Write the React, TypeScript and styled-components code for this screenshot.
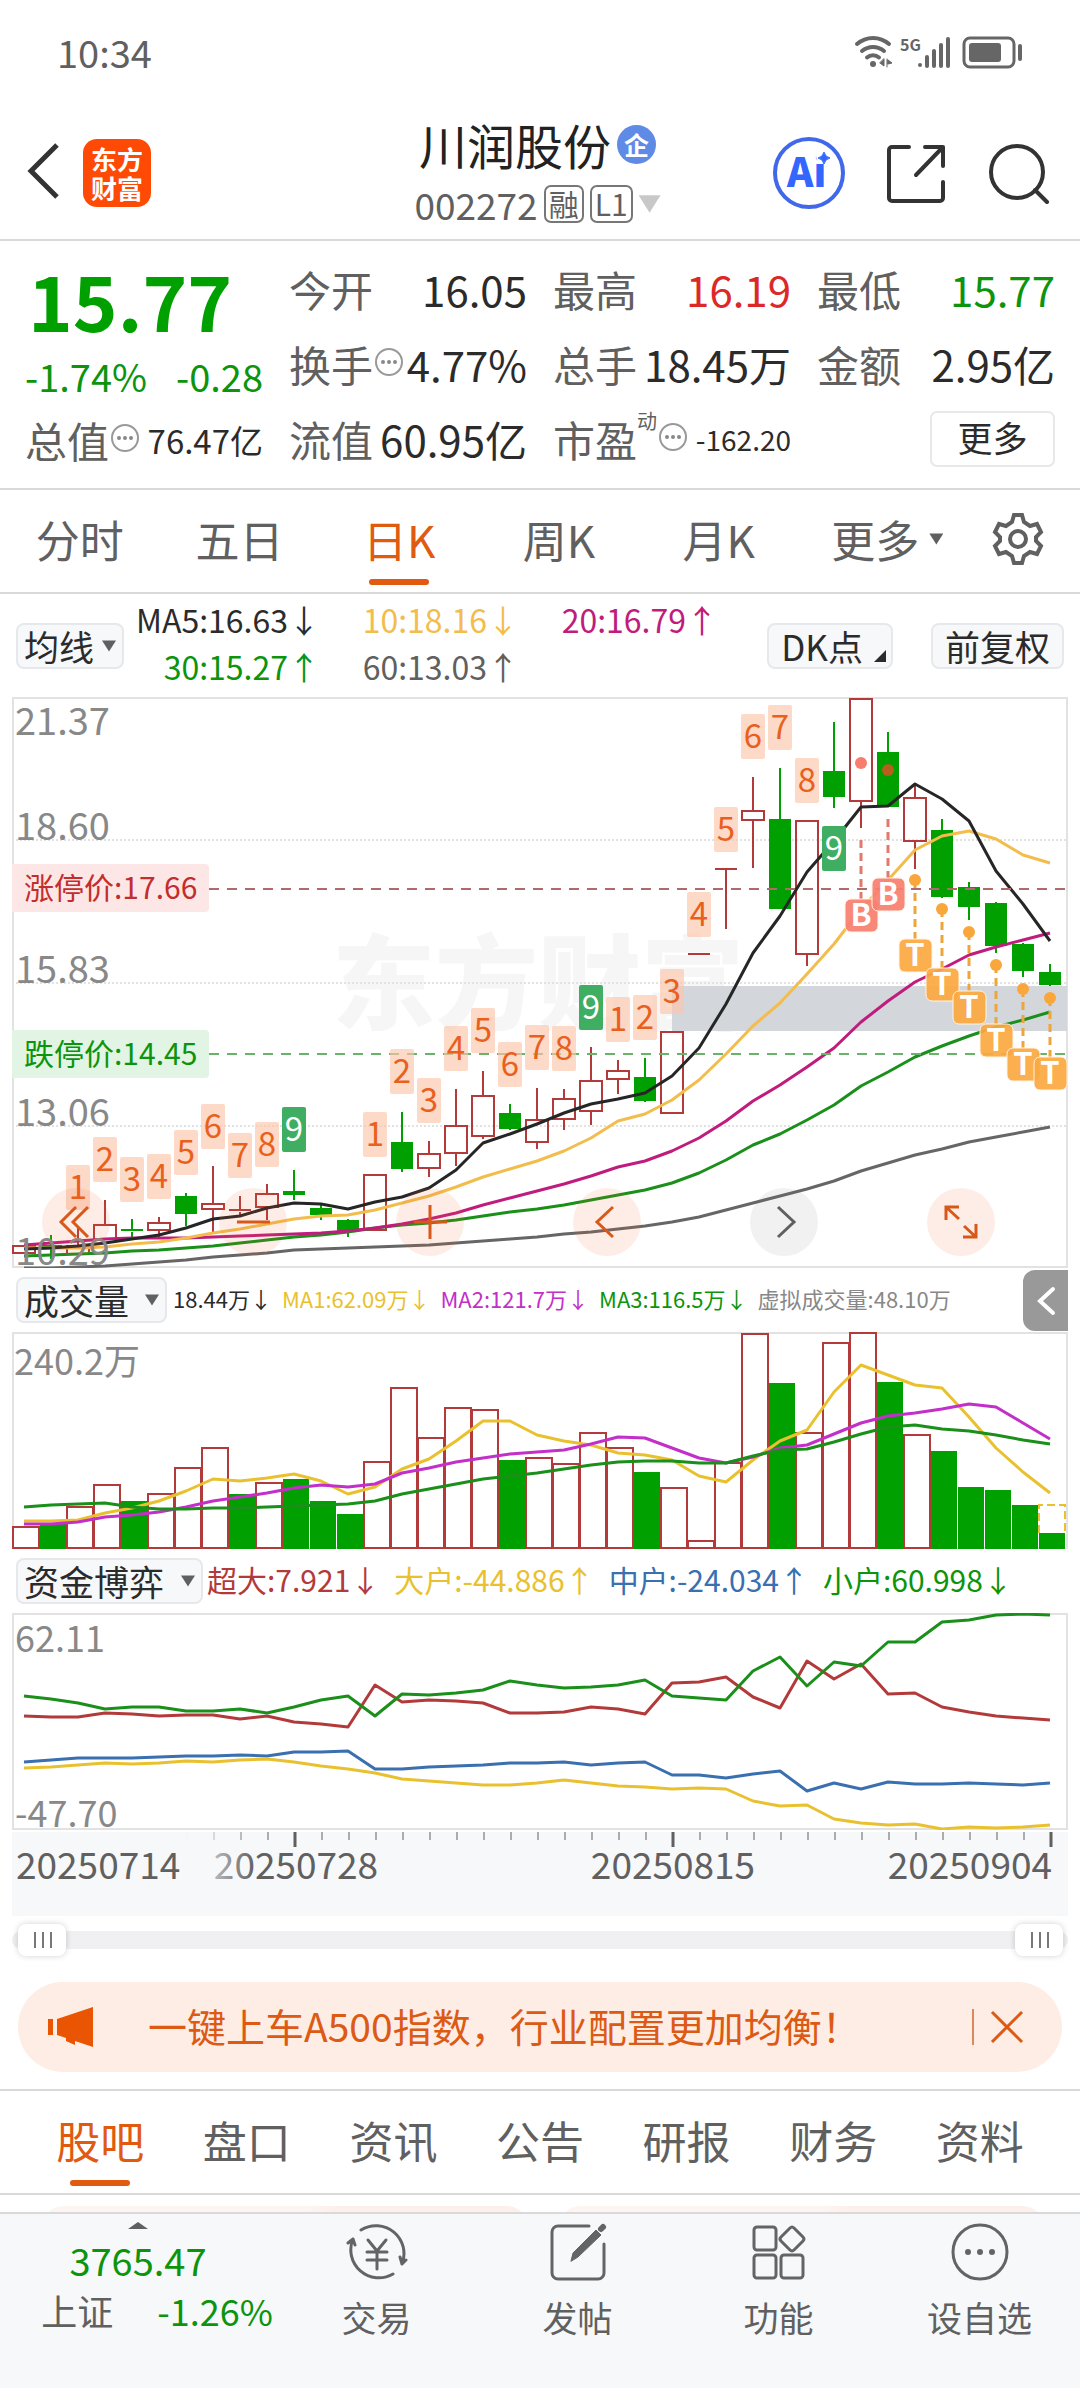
import React from "react";
import styled, { createGlobalStyle } from "styled-components";

const FONT = '"Noto Sans CJK SC", "Noto Sans", sans-serif';

const C = {
  ink: "#2b2b2b",
  sub: "#606060",
  faint: "#888888",
  line: "#d9d9d9",
  orange: "#e05a10",
  green: "#00a000",
  greenText: "#0c940c",
  red: "#b23a3a",
  redText: "#dc2828",
  yellow: "#f2bd4c",
  gold: "#e9c12e",
  magenta: "#bf1c7d",
  purple: "#c22fc9",
  blue: "#3a6fb0",
  panel: "#f6f8fa",
};

const Global = createGlobalStyle`
  *, *::before, *::after { box-sizing: border-box; }
  body { margin: 0; background: #fff; color: ${C.ink}; font-family: ${FONT}; }
  button, select, input { font: inherit; color: inherit; margin: 0; }
  button { border: 0; background: none; padding: 0; cursor: pointer; }
  a { color: inherit; text-decoration: none; }
  h1, p, dl, dd, dt { margin: 0; font-weight: 400; }
`;

/* ---------- shared parts ---------- */

const Page = styled.div`
  display: flex;
  flex-direction: column;
  background: #fff;
`;

const Caret = styled.span<{ $size?: number; $color?: string; $up?: boolean }>`
  display: inline-block;
  flex: none;
  width: ${(p) => p.$size ?? 14}px;
  height: ${(p) => p.$size ?? 14}px;
  background: ${(p) => p.$color ?? C.sub};
  clip-path: ${(p) =>
    p.$up ? "polygon(50% 40%, 100% 75%, 0 75%)" : "polygon(0 10%, 100% 10%, 50% 90%)"};
`;

const chip = `
  height: 46px;
  border: 2px solid #e6e8ec;
  border-radius: 8px;
  background: ${C.panel};
  font-size: 35px;
  color: ${C.ink};
`;

const PickerBox = styled.label<{ $width: number }>`
  position: relative;
  display: block;
  flex: none;
  width: ${(p) => p.$width}px;
  height: 46px;
`;

const Picker = styled.select`
  ${chip}
  display: block;
  appearance: none;
  width: 100%;
  padding: 0 0 0 6px;
  line-height: 38px;
  outline: none;
`;

const PickerCaret = styled(Caret)`
  position: absolute;
  right: 8px;
  top: 16px;
  pointer-events: none;
`;

function Dropdown({ label, options, width }: { label: string; options: string[]; width: number }) {
  return (
    <PickerBox $width={width}>
      <Picker aria-label={label} defaultValue={options[0]}>
        {options.map((o) => (
          <option key={o}>{o}</option>
        ))}
      </Picker>
      <PickerCaret />
    </PickerBox>
  );
}

/* ---------- status bar ---------- */

const StatusBar = styled.div`
  display: flex;
  align-items: center;
  justify-content: space-between;
  height: 108px;
  padding: 0 56px 5px 57px;
  font-size: 38px;
  color: ${C.sub};
`;

function StatusIcons() {
  return (
    <svg width="170" height="36" viewBox="0 0 170 36" fill="none" stroke="#666" strokeLinecap="round">
      <g strokeWidth="4">
        <path d="M3 10a24 24 0 0 1 32 0" />
        <path d="M8 17a17 17 0 0 1 22 0" />
        <path d="M13 23.500a9 9 0 0 1 12 0" />
      </g>
      <circle cx="19" cy="30" r="3" fill="#666" stroke="none" />
      <path d="M30 25v7l-4-3zM33 25v8M34 26l4 3-4 1z" fill="#666" strokeWidth="1" />
      <text x="46" y="17" fontSize="16" fontWeight="700" fill="#666" stroke="none" fontFamily={FONT}>
        5G
      </text>
      <path d="M66 31v0M73 23v9M80 17v15M87 11v21M94 5v27" strokeWidth="4" />
      <rect x="110" y="4" width="50" height="29" rx="6" strokeWidth="3" />
      <rect x="115" y="9" width="32" height="19" rx="3" fill="#666" stroke="none" />
      <path d="M166 12v13" strokeWidth="4" />
    </svg>
  );
}

/* ---------- header ---------- */

const Header = styled.header`
  display: grid;
  grid-template-columns: 1fr auto 1fr;
  align-items: start;
  height: 133px;
  padding: 0 30px 0 25px;
  border-bottom: 2px solid ${C.line};
`;

const HeaderLeft = styled.div`
  display: flex;
  align-items: center;
  gap: 20px;
  padding-top: 31px;
`;

const HeaderRight = styled.div`
  display: flex;
  align-items: center;
  justify-content: flex-end;
  gap: 41px;
  padding-top: 29px;
  button {
    display: flex;
  }
`;

const BrandLogo = styled.a`
  display: grid;
  place-content: center;
  width: 68px;
  height: 68px;
  border-radius: 14px;
  background: #ff4a05;
  color: #fff;
  font-size: 26px;
  font-weight: 700;
  line-height: 29px;
  text-align: center;
`;

const TitleBlock = styled.div`
  display: flex;
  flex-direction: column;
  align-items: center;
  padding-top: 5px;
`;

const TitleRow = styled.div`
  display: flex;
  align-items: center;
  gap: 6px;
  height: 62px;
  h1 {
    font-size: 48px;
    line-height: 56px;
    color: #222;
  }
`;

const OrgBadge = styled.span`
  display: grid;
  place-items: center;
  width: 39px;
  height: 39px;
  border-radius: 50%;
  background: #5f8be6;
  color: #fff;
  font-size: 25px;
  font-weight: 700;
  line-height: 32px;
`;

const CodeRow = styled.div`
  display: flex;
  align-items: center;
  gap: 6px;
  height: 58px;
  font-size: 37px;
  line-height: 46px;
  color: ${C.sub};
`;

const CodeTag = styled.span`
  height: 38px;
  padding: 0 3px;
  border: 2px solid #777;
  border-radius: 7px;
  font-size: 30px;
  line-height: 32px;
`;

/* ---------- quote ---------- */

const Quote = styled.section`
  display: grid;
  grid-template-columns: repeat(4, 1fr);
  gap: 26px;
  padding: 10px 25px 11px;
  border-bottom: 2px solid ${C.line};
`;

const QuoteColumn = styled.dl`
  display: flex;
  flex-direction: column;
`;

const Price = styled.p`
  height: 96px;
  padding-left: 3px;
  font-size: 76px;
  font-weight: 700;
  line-height: 96px;
  color: ${C.green};
`;

const Change = styled.p`
  display: flex;
  justify-content: space-between;
  height: 55px;
  font-size: 38px;
  line-height: 58px;
  color: ${C.greenText};
`;

const QuoteItem = styled.div`
  display: flex;
  align-items: center;
  justify-content: space-between;
  height: 75px;
  white-space: nowrap;
`;

const QuoteLabel = styled.dt`
  display: flex;
  align-items: center;
  font-size: 42px;
  line-height: 60px;
  color: ${C.sub};
  sup {
    align-self: flex-start;
    margin-right: -16px;
    font-size: 20px;
    line-height: 24px;
  }
`;

const QuoteValue = styled.dd<{ $color?: string; $size?: number }>`
  font-size: ${(p) => p.$size ?? 42}px;
  line-height: 60px;
  color: ${(p) => p.$color ?? C.ink};
`;

const MoreButton = styled.button`
  width: 125px;
  height: 56px;
  margin-left: auto;
  padding-bottom: 4px;
  border: 2px solid #e8e8e8;
  border-radius: 7px;
  font-size: 35px;
  line-height: 48px;
`;

const SupDots = styled.span`
  display: flex;
  margin-left: 16px;
`;

function InfoDots() {
  return (
    <svg width="32" height="32" viewBox="0 0 32 32" fill="none">
      <circle cx="16" cy="14" r="13" stroke="#999" strokeWidth="2" />
      <g fill="#888">
        <circle cx="10" cy="14" r="2" />
        <circle cx="16" cy="14" r="2" />
        <circle cx="22" cy="14" r="2" />
      </g>
    </svg>
  );
}

type Item = { label: string; value: string; color?: string; info?: boolean; sup?: string; size?: number };

function QuoteRow({ label, value, color, info, sup, size }: Item) {
  return (
    <QuoteItem>
      <QuoteLabel>
        {label}
        {sup && <sup>{sup}</sup>}
        {info && !sup && <InfoDots />}
        {info && sup && (
          <SupDots>
            <InfoDots />
          </SupDots>
        )}
      </QuoteLabel>
      <QuoteValue $color={color} $size={size}>
        {value}
      </QuoteValue>
    </QuoteItem>
  );
}

/* ---------- tabs ---------- */

const PeriodTabs = styled.nav`
  display: flex;
  align-items: stretch;
  height: 104px;
  padding-right: 20px;
  border-bottom: 2px solid ${C.line};
`;

const Tab = styled.button<{ $active?: boolean; $grow?: number }>`
  position: relative;
  display: flex;
  align-items: center;
  justify-content: center;
  gap: 10px;
  flex: ${(p) => p.$grow ?? 160} 1 0;
  padding-bottom: 4px;
  font-size: 44px;
  color: ${(p) => (p.$active ? C.orange : C.sub)};
  &::after {
    content: "";
    display: ${(p) => (p.$active ? "block" : "none")};
    position: absolute;
    bottom: 7px;
    left: calc(50% - 30px);
    width: 60px;
    height: 6px;
    border-radius: 3px;
    background: ${C.orange};
  }
`;

/* ---------- moving averages ---------- */

const AverageBar = styled.div`
  display: flex;
  align-items: flex-start;
  height: 103px;
  padding: 0 16px;
`;

const AverageGrid = styled.div`
  display: grid;
  grid-template-columns: 196px 199px 199px;
  grid-auto-rows: 47px;
  flex: 1;
  padding-top: 2px;
  font-size: 32px;
  line-height: 47px;
  text-align: right;
  white-space: nowrap;
`;

const Tinted = styled.span<{ $color: string }>`
  color: ${(p) => p.$color};
`;

const AverageChips = styled.div`
  display: flex;
  gap: 38px;
  padding-top: 29px;
`;

const ChipSlot = styled.div`
  flex: none;
  padding-top: 29px;
`;

const ChipButton = styled.button<{ $corner?: boolean }>`
  ${chip}
  position: relative;
  padding: 0 12px;
  line-height: 38px;
  padding-right: ${(p) => (p.$corner ? 28 : 12)}px;
  white-space: nowrap;
  &::after {
    content: "";
    display: ${(p) => (p.$corner ? "block" : "none")};
    position: absolute;
    right: 5px;
    bottom: 5px;
    width: 12px;
    height: 12px;
    background: ${C.ink};
    clip-path: polygon(100% 0, 100% 100%, 0 100%);
  }
`;

/* ---------- charts ---------- */

const ChartBox = styled.section`
  position: relative;
  margin: 0 12px;
`;

const Plot = styled.svg`
  display: block;
  width: 100%;
  height: auto;
  font-family: ${FONT};
`;

const ChartTools = styled.div`
  position: absolute;
  left: 30px;
  right: 73px;
  bottom: 12px;
  display: flex;
  justify-content: space-between;
`;

const RoundTool = styled.button<{ $muted?: boolean }>`
  display: grid;
  place-items: center;
  width: 68px;
  height: 68px;
  border-radius: 50%;
  background: ${(p) => (p.$muted ? "rgba(120,120,120,0.1)" : "rgba(240,110,50,0.12)")};
  color: ${(p) => (p.$muted ? C.sub : "#d8581a")};
`;

const IndicatorBar = styled.div<{ $gap: number; $size: number }>`
  position: relative;
  display: flex;
  align-items: center;
  gap: ${(p) => p.$gap}px;
  height: 64px;
  padding-left: 4px;
  font-size: ${(p) => p.$size}px;
  white-space: nowrap;
`;

const Readings = styled.div<{ $gap: number }>`
  display: flex;
  gap: ${(p) => p.$gap}px;
  padding-bottom: 4px;
`;

const CollapseButton = styled.button`
  position: absolute;
  right: 0;
  top: 2px;
  display: grid;
  place-items: center;
  width: 45px;
  height: 61px;
  border-radius: 12px 0 0 12px;
  background: #999;
  color: #fff;
`;

const COUNT = 39;
const cx = (i: number) => Math.round(24.4 + 26.99 * i);
const toPoints = (ys: number[]) => ys.map((y, i) => `${cx(i)},${y}`).join(" ");

/* direction, body top, body bottom, high, low */
type Candle = ["u" | "d", number, number, number, number];
const candles: Candle[] = [
  ["u", 1245, 1253, 1245, 1253],
  ["d", 1245, 1249, 1235, 1259],
  ["u", 1245, 1254, 1226, 1254],
  ["u", 1224, 1239, 1200, 1239],
  ["d", 1230, 1232, 1219, 1237],
  ["u", 1222, 1230, 1217, 1237],
  ["d", 1196, 1214, 1193, 1226],
  ["u", 1203, 1209, 1166, 1233],
  ["u", 1210, 1212, 1196, 1216],
  ["u", 1193, 1207, 1184, 1220],
  ["d", 1191, 1195, 1170, 1200],
  ["d", 1208, 1215, 1205, 1220],
  ["d", 1220, 1231, 1219, 1237],
  ["u", 1174, 1230, 1174, 1230],
  ["d", 1142, 1169, 1112, 1172],
  ["u", 1153, 1168, 1141, 1177],
  ["u", 1125, 1153, 1089, 1166],
  ["u", 1095, 1136, 1071, 1139],
  ["d", 1113, 1129, 1104, 1130],
  ["u", 1119, 1142, 1088, 1149],
  ["u", 1098, 1119, 1089, 1130],
  ["u", 1080, 1111, 1047, 1125],
  ["u", 1070, 1079, 1060, 1094],
  ["d", 1077, 1101, 1058, 1102],
  ["u", 1031, 1113, 1031, 1113],
  ["u", 954, 955, 954, 955],
  ["u", 869, 870, 869, 929],
  ["u", 810, 820, 777, 868],
  ["d", 819, 909, 768, 909],
  ["u", 820, 954, 820, 966],
  ["d", 771, 797, 722, 808],
  ["u", 698, 801, 698, 828],
  ["d", 752, 807, 732, 807],
  ["u", 797, 841, 785, 869],
  ["d", 830, 897, 819, 898],
  ["d", 887, 907, 882, 920],
  ["d", 903, 946, 902, 953],
  ["d", 944, 971, 943, 977],
  ["d", 972, 985, 964, 986],
];

const averages: { color: string; ys: number[] }[] = [
  {
    color: "#666666",
    ys: [1268, 1268, 1267, 1266, 1264, 1262, 1260, 1257, 1255, 1253, 1250, 1249, 1248, 1247, 1246, 1245, 1243, 1241, 1239, 1237, 1234, 1232, 1229, 1226, 1222, 1217, 1210, 1203, 1196, 1189, 1181, 1171, 1163, 1155, 1149, 1142, 1137, 1132, 1127],
  },
  {
    color: "#1a8f1a",
    ys: [1256, 1255, 1254, 1253, 1251, 1250, 1248, 1246, 1243, 1240, 1237, 1235, 1232, 1228, 1225, 1223, 1220, 1216, 1212, 1209, 1205, 1200, 1195, 1190, 1183, 1173, 1160, 1145, 1134, 1120, 1105, 1086, 1072, 1057, 1046, 1036, 1027, 1020, 1012],
  },
  {
    color: C.magenta,
    ys: [1245, 1243, 1241, 1239, 1238, 1238, 1238, 1237, 1236, 1235, 1234, 1233, 1231, 1228, 1224, 1219, 1213, 1205, 1198, 1191, 1184, 1176, 1167, 1161, 1151, 1138, 1121, 1101, 1085, 1067, 1048, 1022, 1001, 982, 969, 955, 947, 940, 933],
  },
  {
    color: C.yellow,
    ys: [1248, 1248, 1248, 1247, 1244, 1242, 1238, 1233, 1229, 1224, 1219, 1216, 1215, 1210, 1203, 1196, 1187, 1177, 1169, 1161, 1151, 1138, 1121, 1114, 1100, 1080, 1054, 1026, 1003, 974, 944, 909, 880, 850, 836, 831, 839, 855, 863],
  },
  {
    color: "#262626",
    ys: [1249, 1248, 1246, 1243, 1239, 1235, 1228, 1219, 1216, 1208, 1203, 1204, 1209, 1202, 1197, 1188, 1170, 1143, 1134, 1124, 1113, 1104, 1099, 1093, 1076, 1048, 1004, 953, 916, 872, 841, 807, 806, 784, 799, 821, 871, 904, 941],
  },
];

/* candle index, sequence number, top of the tag */
const sequence: [number, number, number][] = [
  [2, 1, 1165], [3, 2, 1137], [4, 3, 1157], [5, 4, 1154], [6, 5, 1130], [7, 6, 1104], [8, 7, 1133], [9, 8, 1122], [10, 9, 1107],
  [13, 1, 1112], [14, 2, 1049], [15, 3, 1078], [16, 4, 1026], [17, 5, 1008], [18, 6, 1042], [19, 7, 1025], [20, 8, 1026], [21, 9, 985],
  [22, 1, 997], [23, 2, 995], [24, 3, 969], [25, 4, 892], [26, 5, 807], [27, 6, 714], [28, 7, 705], [29, 8, 758], [30, 9, 826],
];

/* candle index, letter, dot, start of the stem, top of the badge */
const signals: [number, "B" | "T", number, number, number][] = [
  [31, "B", 763, 840, 899],
  [32, "B", 770, 819, 878],
  [33, "T", 880, 880, 939],
  [34, "T", 909, 909, 968],
  [35, "T", 932, 932, 991],
  [36, "T", 965, 965, 1024],
  [37, "T", 989, 989, 1048],
  [38, "T", 998, 998, 1057],
];

const priceScale: [string, number][] = [
  ["21.37", 735],
  ["18.60", 840],
  ["15.83", 983],
  ["13.06", 1126],
  ["10.29", 1265],
];

function PriceChart() {
  return (
    <Plot viewBox="12 697 1056 571" role="img" aria-label="日K">
      <text x="332" y="1022" fontSize="103" fontWeight="900" fill="#f6f6f6">
        东方财富
      </text>
      <g stroke="#e2e2e2" fill="none">
        <path d="M12 840H1067M12 983H1067M12 1126H1067" strokeWidth="2" strokeDasharray="2 2" />
        <rect x="13" y="698" width="1054" height="569" strokeWidth="2" />
      </g>
      <rect x="672" y="986" width="395" height="45" fill="#d3d7dc" />
      {candles.map(([dir, top, bottom, high, low], i) => {
        const x = cx(i);
        const up = dir === "u";
        const color = up ? C.red : C.green;
        const flat = bottom - top < 3;
        return (
          <g key={i} stroke={color} strokeWidth="2">
            {high < top && <path d={`M${x} ${high}V${top}`} />}
            {low > bottom && <path d={`M${x} ${bottom}V${low}`} />}
            {flat ? (
              <path d={`M${x - 11} ${top}H${x + 11}`} />
            ) : up ? (
              <rect x={x - 11} y={top + 1} width="22" height={bottom - top - 1} fill="none" />
            ) : (
              <rect x={x - 11} y={top} width="22" height={bottom - top} fill={color} stroke="none" />
            )}
          </g>
        );
      })}
      {averages.map((line) => (
        <polyline key={line.color} points={toPoints(line.ys)} fill="none" stroke={line.color} strokeWidth="3" strokeLinejoin="round" />
      ))}
      {priceScale.map(([label, y]) => (
        <text key={label} x="15" y={y} fontSize="38" fill={C.faint}>
          {label}
        </text>
      ))}
      <g strokeWidth="2" strokeDasharray="10 8">
        <path d="M209 889H1067" stroke="#b06a6a" />
        <path d="M209 1054H1067" stroke="#6ab36a" />
      </g>
      <path d="M12 864H205a4 4 0 0 1 4 4V908a4 4 0 0 1-4 4H12Z" fill="#fde6e6" />
      <text x="24" y="899" fontSize="30" fill="#c22d2d">
        涨停价:17.66
      </text>
      <path d="M12 1030H205a4 4 0 0 1 4 4V1074a4 4 0 0 1-4 4H12Z" fill="#e2f4e4" />
      <text x="24" y="1065" fontSize="30" fill={C.greenText}>
        跌停价:14.45
      </text>
      {sequence.map(([i, n, top]) => {
        const last = n === 9;
        return (
          <g key={i}>
            <rect x={cx(i) - 12} y={top} width="24" height="45" rx="2" fill={last ? "#3fae62" : "#fcc5aa"} fillOpacity={last ? 1 : 0.65} />
            <text x={cx(i)} y={top + 34} fontSize="33" textAnchor="middle" fill={last ? "#fff" : "#e8601c"}>
              {n}
            </text>
          </g>
        );
      })}
      {signals.map(([i, letter, dot, stem, top]) => {
        const buy = letter === "B";
        const color = buy ? "#e07a6c" : "#eda63c";
        const x = cx(i);
        return (
          <g key={i}>
            <path d={`M${x} ${stem}V${top}`} stroke={color} strokeWidth="3" strokeDasharray="8 5" />
            <circle cx={x} cy={dot} r="6" fill={i === 32 ? "#b5601e" : buy ? "#f87d6e" : "#f9a63a"} />
            <rect x={x - 16} y={top} width="33" height="33" rx="6" fill={buy ? "#f87f70" : "#fba941"} fillOpacity="0.93" stroke="#fff3e2" strokeWidth="1" />
            <text x={x} y={top + 27} fontSize="31" fontWeight="700" textAnchor="middle" fill="#fff">
              {letter}
            </text>
          </g>
        );
      })}
    </Plot>
  );
}

const volumes: ["u" | "d", number][] = [
  ["u", 1526], ["d", 1524], ["u", 1506], ["u", 1484], ["d", 1501], ["u", 1493], ["u", 1467], ["u", 1447], ["d", 1494], ["u", 1482],
  ["d", 1479], ["d", 1501], ["d", 1514], ["u", 1461], ["u", 1387], ["u", 1437], ["u", 1407], ["u", 1409], ["d", 1460], ["u", 1457],
  ["u", 1463], ["u", 1432], ["u", 1447], ["d", 1472], ["u", 1487], ["u", 1540], ["u", 1462], ["u", 1333], ["d", 1383], ["u", 1432],
  ["u", 1342], ["u", 1332], ["d", 1382], ["u", 1434], ["d", 1451], ["d", 1487], ["d", 1490], ["d", 1505], ["d", 1533],
];

const volumeAverages: { color: string; ys: number[] }[] = [
  {
    color: C.gold,
    ys: [1521, 1521, 1520, 1513, 1508, 1501, 1491, 1479, 1481, 1478, 1474, 1481, 1494, 1487, 1469, 1459, 1441, 1421, 1421, 1435, 1441, 1445, 1453, 1455, 1460, 1476, 1482, 1460, 1441, 1430, 1392, 1365, 1375, 1385, 1388, 1417, 1448, 1472, 1493],
  },
  {
    color: C.purple,
    ys: [1524, 1524, 1522, 1517, 1515, 1512, 1507, 1501, 1497, 1493, 1488, 1485, 1487, 1484, 1473, 1468, 1462, 1458, 1454, 1452, 1450, 1444, 1437, 1438, 1448, 1458, 1463, 1457, 1448, 1445, 1434, 1423, 1416, 1413, 1409, 1404, 1407, 1423, 1439],
  },
  {
    color: "#1a8f1a",
    ys: [1507, 1505, 1504, 1503, 1507, 1509, 1509, 1508, 1508, 1507, 1506, 1505, 1504, 1501, 1494, 1489, 1484, 1479, 1476, 1473, 1469, 1465, 1462, 1461, 1461, 1463, 1463, 1456, 1450, 1449, 1442, 1434, 1427, 1425, 1429, 1431, 1435, 1440, 1444],
  },
];

function VolumeChart() {
  return (
    <Plot viewBox="12 1332 1056 217" role="img" aria-label="成交量">
      <rect x="13" y="1333" width="1054" height="215" fill="none" stroke="#e2e2e2" strokeWidth="2" />
      {volumes.map(([dir, top], i) => {
        const x = 12 + 27 * i;
        return dir === "u" ? (
          <rect key={i} x={x + 1} y={top + 1} width="26" height={1547 - top} fill="none" stroke={C.red} strokeWidth="2" />
        ) : (
          <rect key={i} x={x + 1} y={top} width="26" height={1549 - top} fill={C.green} />
        );
      })}
      <path d="M1039 1533V1505H1065V1533" fill="none" stroke={C.gold} strokeWidth="2" strokeDasharray="8 4" />
      {volumeAverages.map((line) => (
        <polyline key={line.color} points={toPoints(line.ys)} fill="none" stroke={line.color} strokeWidth="3" strokeLinejoin="round" />
      ))}
      <text x="14" y="1375" fontSize="36" fill={C.faint}>
        240.2万
      </text>
    </Plot>
  );
}

/* depth below the top of the plot, in thirds of a unit */
const flows: { color: string; depth: number[] }[] = [
  {
    color: C.red,
    depth: [348, 352, 352, 338, 343, 348, 344, 344, 356, 347, 366, 372, 382, 256, 305, 301, 304, 308, 340, 339, 336, 321, 328, 341, 249, 247, 230, 290, 323, 182, 237, 193, 281, 280, 320, 335, 348, 354, 360],
  },
  {
    color: "#1a8f1a",
    depth: [288, 297, 308, 328, 321, 322, 332, 333, 327, 338, 322, 301, 288, 347, 281, 284, 279, 269, 243, 254, 264, 261, 254, 239, 287, 294, 299, 214, 172, 259, 185, 199, 126, 126, 67, 60, 45, 42, 46],
  },
  {
    color: C.blue,
    depth: [487, 479, 473, 475, 473, 470, 469, 467, 464, 467, 457, 457, 453, 508, 507, 501, 497, 495, 489, 488, 487, 496, 488, 486, 525, 525, 535, 521, 514, 572, 549, 568, 547, 551, 551, 550, 551, 554, 549],
  },
  {
    color: C.gold,
    depth: [504, 500, 495, 488, 491, 488, 483, 485, 481, 477, 486, 499, 506, 518, 536, 542, 548, 555, 555, 548, 541, 549, 558, 562, 567, 563, 566, 604, 619, 615, 657, 670, 675, 671, 687, 682, 684, 681, 674],
  },
];

function FlowChart() {
  return (
    <Plot viewBox="12 1613 1056 217" role="img" aria-label="资金博弈">
      <rect x="13" y="1614" width="1054" height="215" fill="none" stroke="#e2e2e2" strokeWidth="2" />
      <g fontSize="36" fill={C.faint}>
        <text x="15" y="1652">62.11</text>
        <text x="15" y="1827">-47.70</text>
      </g>
      {flows.map((line) => (
        <polyline key={line.color} points={toPoints(line.depth.map((d) => Math.round(1600 + d / 3)))} fill="none" stroke={line.color} strokeWidth="3" strokeLinejoin="round" />
      ))}
    </Plot>
  );
}

const dates: [string, number, "start" | "middle" | "end"][] = [
  ["20250714", 16, "start"],
  ["20250728", 296, "middle"],
  ["20250815", 673, "middle"],
  ["20250904", 1052, "end"],
];

function DateAxis() {
  return (
    <Plot viewBox="12 1830 1056 86" role="img" aria-label="日期">
      <defs>
        <linearGradient id="fade">
          <stop offset="0" stopColor="#f7f8fa" />
          <stop offset="1" stopColor="#f7f8fa" stopOpacity="0" />
        </linearGradient>
      </defs>
      <rect x="12" y="1832" width="1056" height="84" fill="#f7f8fa" />
      {Array.from({ length: COUNT }, (_, i) => i)
        .filter((i) => i > 5)
        .map((i) => {
          const major = i === 10 || i === 24 || i === 38;
          return <path key={i} d={`M${cx(i) + 1} 1832v${major ? 15 : 8}`} stroke={C.sub} strokeWidth={major ? 3 : 1} />;
        })}
      {dates.map(([label, x, anchor]) => (
        <text key={label} x={x} y="1879" fontSize="37" textAnchor={anchor} fill={C.sub}>
          {label}
        </text>
      ))}
      <rect x="185" y="1832" width="70" height="84" fill="url(#fade)" />
    </Plot>
  );
}

/* ---------- range slider ---------- */

const RangeBox = styled.div`
  position: relative;
  height: 48px;
  margin: 0 12px;
  &::before {
    content: "";
    position: absolute;
    inset: 15px 0;
    border-radius: 9px;
    background: #f0f0f2;
  }
`;

const RangeInput = styled.input`
  appearance: none;
  position: absolute;
  left: 6px;
  right: 5px;
  top: 8px;
  width: calc(100% - 11px);
  height: 32px;
  background: none;
  pointer-events: none;
  &::-webkit-slider-thumb {
    appearance: none;
    pointer-events: auto;
    width: 48px;
    height: 32px;
    border-radius: 8px;
    box-shadow: 0 0 6px rgba(0, 0, 0, 0.18);
    background: repeating-linear-gradient(90deg, #777 0 2px, #fff 2px 8px) 16px 8px / 18px 16px no-repeat #fff;
  }
`;

/* ---------- notice ---------- */

const Notice = styled.aside`
  display: flex;
  align-items: center;
  height: 90px;
  margin: 18px 18px 17px;
  padding: 0 38px 0 30px;
  border-radius: 45px;
  background: #fdede4;
  color: #dc5a14;
  a {
    flex: 1;
    padding: 0 0 5px 54px;
    font-size: 39px;
    line-height: 60px;
    white-space: nowrap;
  }
`;

const NoticeClose = styled.button`
  display: flex;
  align-items: center;
  padding-left: 16px;
  border-left: 2px solid #dc8a5c;
  height: 36px;
`;

const SectionTabs = styled.nav`
  display: flex;
  height: 106px;
  padding: 0 27px;
  border-top: 2px solid ${C.line};
  border-bottom: 2px solid ${C.line};
`;

const Peek = styled.div`
  display: grid;
  grid-template-columns: 1fr 1fr;
  gap: 33px;
  height: 17px;
  padding: 11px 37px 0 43px;
  overflow: hidden;
`;

const PeekCard = styled.div`
  height: 60px;
  border-radius: 20px;
  background: linear-gradient(90deg, #fdf5f1 0 55%, #fdefec 60%);
`;

/* ---------- bottom bar ---------- */

const BottomBar = styled.nav`
  display: flex;
  height: 176px;
  border-top: 2px solid ${C.line};
  background: ${C.panel};
  color: ${C.sub};
`;

const IndexLink = styled.a`
  display: flex;
  flex-direction: column;
  align-items: center;
  width: 276px;
`;

const IndexValue = styled.span`
  height: 52px;
  font-size: 38px;
  line-height: 52px;
  color: ${C.greenText};
`;

const IndexRow = styled.span`
  display: flex;
  gap: 44px;
  padding-left: 38px;
  font-size: 36px;
  line-height: 48px;
`;

const BottomItem = styled.a`
  display: flex;
  flex-direction: column;
  align-items: center;
  flex: 1;
  gap: 10px;
  padding-top: 7px;
  font-size: 35px;
  line-height: 48px;
`;

function BottomIcon({ name }: { name: string }) {
  return (
    <svg width="62" height="62" viewBox="0 0 62 62" fill="none" stroke="#646464" strokeWidth="3" strokeLinecap="round" strokeLinejoin="round">
      {name === "交易" && (
        <>
          <path d="M15 9a28 28 0 0 1 41 34M56 43l4-4M56 43l-2-7" />
          <path d="M47 53A28 28 0 0 1 7 18M7 18l-5 4M7 18l2 6" />
          <path d="M22 19l9 11 9-11M31 30v18M21 31h20M21 39h20" />
        </>
      )}
      {name === "发帖" && (
        <>
          <path d="M42 5H11a6 6 0 0 0-6 6v41a6 6 0 0 0 6 6h40a6 6 0 0 0 6-6V23" />
          <path d="M24 40l2-8 23-23 5 5-23 22z" fill="#646464" strokeWidth="1" />
          <path d="M54 8l2-2" strokeWidth="6" />
        </>
      )}
      {name === "功能" && (
        <>
          <rect x="6" y="6" width="22" height="23" rx="3" />
          <rect x="6" y="34" width="22" height="23" rx="3" />
          <rect x="33" y="34" width="22" height="23" rx="3" />
          <path d="M42 7q2-2 4 0l9 9q2 2 0 4l-9 9q-2 2-4 0l-9-9q-2-2 0-4z" />
        </>
      )}
      {name === "设自选" && (
        <>
          <circle cx="31" cy="31" r="27" />
          <g fill="#646464" stroke="none">
            <circle cx="19" cy="31" r="3" />
            <circle cx="31" cy="31" r="3" />
            <circle cx="43" cy="31" r="3" />
          </g>
        </>
      )}
    </svg>
  );
}

const tools: { name: string; path: string; width: number; muted?: boolean }[] = [
  { name: "最早", path: "M21 6L6 21l15 15M33 6L18 21l15 15", width: 3 },
  { name: "缩小", path: "M5 21h33", width: 3 },
  { name: "放大", path: "M5 21h33M21 4v34", width: 3 },
  { name: "左移", path: "M27 6L11 21l16 15", width: 3 },
  { name: "右移", path: "M15 6l16 15-16 15", width: 3, muted: true },
  { name: "全屏", path: "M19 6H6v13M6 6l13 12M36 23v13H23M36 36L24 25", width: 3 },
];

export default function App() {
  return (
    <Page>
      <Global />
      <StatusBar>
        <span>10:34</span>
        <StatusIcons />
      </StatusBar>

      <Header>
        <HeaderLeft>
          <button aria-label="返回">
            <svg width="38" height="60" viewBox="0 0 38 60" fill="none" stroke="#333" strokeWidth="5">
              <path d="M32 4L6 30l26 26" />
            </svg>
          </button>
          <BrandLogo href="#">
            东方
            <br />
            财富
          </BrandLogo>
        </HeaderLeft>
        <TitleBlock>
          <TitleRow>
            <h1>川润股份</h1>
            <OrgBadge>企</OrgBadge>
          </TitleRow>
          <CodeRow>
            002272
            <CodeTag>融</CodeTag>
            <CodeTag>L1</CodeTag>
            <Caret $size={22} $color="#c8c8c8" />
          </CodeRow>
        </TitleBlock>
        <HeaderRight>
          <button aria-label="Ai">
            <svg width="73" height="73" viewBox="0 0 73 73">
              <circle cx="36" cy="36" r="34" fill="none" stroke="#4068e8" strokeWidth="4" />
              <text x="14" y="50" fontSize="40" fontWeight="900" fontFamily={FONT} fill="#3366ff">
                Ai
              </text>
              <circle cx="50" cy="19" r="7" fill="#fff" />
              <path d="M51 15q1 5 6 6-5 1-6 6-1-5-6-6 5-1 6-6z" fill="#3366ff" stroke="#3366ff" />
            </svg>
          </button>
          <button aria-label="分享">
            <svg width="60" height="60" viewBox="0 0 60 60" fill="none" stroke="#333" strokeWidth="4" strokeLinecap="round" strokeLinejoin="round">
              <path d="M22 3H5a3 3 0 0 0-3 3v48a3 3 0 0 0 3 3h48a3 3 0 0 0 3-3V38M38 3h18v19M56 3L29 31" />
            </svg>
          </button>
          <button aria-label="搜索">
            <svg width="62" height="60" viewBox="0 0 62 60" fill="none" stroke="#333" strokeWidth="4" strokeLinecap="round">
              <circle cx="29" cy="28" r="26" />
              <path d="M47 46l12 12" />
            </svg>
          </button>
        </HeaderRight>
      </Header>

      <Quote>
        <QuoteColumn as="div">
          <Price>15.77</Price>
          <Change>
            <span>-1.74%</span>
            <span>-0.28</span>
          </Change>
          <QuoteItem as="dl">
            <QuoteLabel>
              总值
              <InfoDots />
            </QuoteLabel>
            <QuoteValue $size={33}>76.47亿</QuoteValue>
          </QuoteItem>
        </QuoteColumn>
        <QuoteColumn>
          <QuoteRow label="今开" value="16.05" />
          <QuoteRow label="换手" value="4.77%" info />
          <QuoteRow label="流值" value="60.95亿" />
        </QuoteColumn>
        <QuoteColumn>
          <QuoteRow label="最高" value="16.19" color={C.redText} />
          <QuoteRow label="总手" value="18.45万" />
          <QuoteRow label="市盈" value="-162.20" info sup="动" size={28} />
        </QuoteColumn>
        <QuoteColumn>
          <QuoteRow label="最低" value="15.77" color={C.greenText} />
          <QuoteRow label="金额" value="2.95亿" />
          <QuoteItem>
            <MoreButton>更多</MoreButton>
          </QuoteItem>
        </QuoteColumn>
      </Quote>

      <PeriodTabs>
        {["分时", "五日", "日K", "周K", "月K"].map((name) => (
          <Tab key={name} $active={name === "日K"}>
            {name}
          </Tab>
        ))}
        <Tab $grow={178} aria-haspopup="menu">
          更多
          <Caret />
        </Tab>
        <Tab $grow={84} aria-label="设置">
          <svg width="52" height="54" viewBox="0 0 52 54" fill="none" stroke="#606060" strokeWidth="4" strokeLinejoin="miter">
            <path d="M22 3h8l2 7 6 4 7-2 4 8-5 5v4l5 5-4 8-7-2-6 4-2 7h-8l-2-7-6-4-7 2-4-8 5-5v-4l-5-5 4-8 7 2 6-4z" />
            <circle cx="26" cy="27" r="8" />
          </svg>
        </Tab>
      </PeriodTabs>

      <AverageBar>
        <ChipSlot>
          <Dropdown label="主图指标" options={["均线"]} width={108} />
        </ChipSlot>
        <AverageGrid>
          <Tinted $color={C.ink}>MA5:16.63↓</Tinted>
          <Tinted $color={C.yellow}>10:18.16↓</Tinted>
          <Tinted $color={C.magenta}>20:16.79↑</Tinted>
          <Tinted $color={C.greenText}>30:15.27↑</Tinted>
          <Tinted $color={C.sub}>60:13.03↑</Tinted>
        </AverageGrid>
        <AverageChips>
          <ChipButton $corner>DK点</ChipButton>
          <ChipButton>前复权</ChipButton>
        </AverageChips>
      </AverageBar>

      <ChartBox>
        <PriceChart />
        <ChartTools>
          {tools.map((tool) => (
            <RoundTool key={tool.name} aria-label={tool.name} $muted={tool.muted}>
              <svg width="42" height="42" viewBox="0 0 42 42" fill="none" stroke="currentColor" strokeWidth={tool.width}>
                <path d={tool.path} />
              </svg>
            </RoundTool>
          ))}
        </ChartTools>
      </ChartBox>

      <ChartBox>
        <IndicatorBar $gap={6} $size={22}>
          <Dropdown label="副图指标一" options={["成交量"]} width={151} />
          <Readings $gap={10}>
            <Tinted $color={C.ink}>18.44万↓</Tinted>
            <Tinted $color={C.gold}>MA1:62.09万↓</Tinted>
            <Tinted $color={C.purple}>MA2:121.7万↓</Tinted>
            <Tinted $color={C.greenText}>MA3:116.5万↓</Tinted>
            <Tinted $color={C.faint}>虚拟成交量:48.10万</Tinted>
          </Readings>
          <CollapseButton aria-label="展开侧栏">
            <svg width="20" height="32" viewBox="0 0 20 32" fill="none" stroke="currentColor" strokeWidth="4" strokeLinecap="round">
              <path d="M17 4L4 16l13 12" />
            </svg>
          </CollapseButton>
        </IndicatorBar>
        <VolumeChart />
      </ChartBox>

      <ChartBox>
        <IndicatorBar $gap={4} $size={30}>
          <Dropdown label="副图指标二" options={["资金博弈"]} width={187} />
          <Readings $gap={14}>
            <Tinted $color={C.red}>超大:7.921↓</Tinted>
            <Tinted $color={C.gold}>大户:-44.886↑</Tinted>
            <Tinted $color={C.blue}>中户:-24.034↑</Tinted>
            <Tinted $color={C.greenText}>小户:60.998↓</Tinted>
          </Readings>
        </IndicatorBar>
        <FlowChart />
        <DateAxis />
      </ChartBox>

      <RangeBox>
        <RangeInput type="range" aria-label="起始日期" min={0} max={100} defaultValue={0} />
        <RangeInput type="range" aria-label="结束日期" min={0} max={100} defaultValue={100} />
      </RangeBox>

      <Notice>
        <svg width="46" height="40" viewBox="0 0 46 40" fill="#ea5504">
          <path d="M0 12h5v16H0zM9 12L45 0v40l-18-6v4l-9-4v-3L9 28z" />
        </svg>
        <a href="#">一键上车A500指数，行业配置更加均衡！</a>
        <NoticeClose aria-label="关闭">
          <svg width="34" height="34" viewBox="0 0 34 34" stroke="currentColor" strokeWidth="3">
            <path d="M2 2l30 30M32 2L2 32" />
          </svg>
        </NoticeClose>
      </Notice>

      <SectionTabs>
        {["股吧", "盘口", "资讯", "公告", "研报", "财务", "资料"].map((name) => (
          <Tab key={name} $active={name === "股吧"}>
            {name}
          </Tab>
        ))}
      </SectionTabs>

      <Peek>
        <PeekCard />
        <PeekCard />
      </Peek>

      <BottomBar>
        <IndexLink href="#">
          <Caret $up $size={20} />
          <IndexValue>3765.47</IndexValue>
          <IndexRow>
            上证
            <Tinted $color={C.greenText}>-1.26%</Tinted>
          </IndexRow>
        </IndexLink>
        {["交易", "发帖", "功能", "设自选"].map((name) => (
          <BottomItem key={name} href="#">
            <BottomIcon name={name} />
            {name}
          </BottomItem>
        ))}
      </BottomBar>
    </Page>
  );
}
